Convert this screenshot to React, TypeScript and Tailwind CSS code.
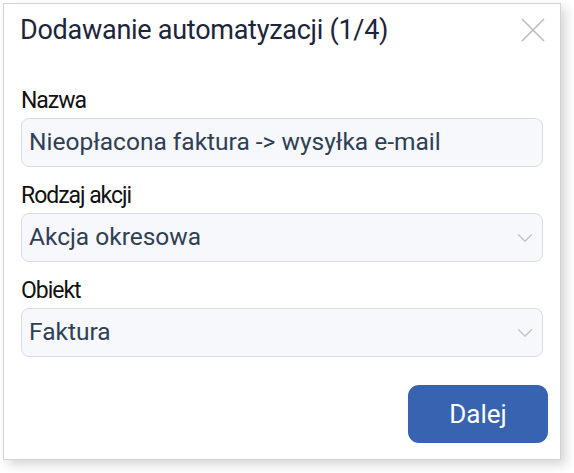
import { ChevronDown } from "lucide-react";

const font = { fontFamily: "Roboto, 'Noto Sans', sans-serif" };

function Field({ label, value, select }: { label: string; value: string; select?: boolean }) {
  return (
    <div className="flex flex-col">
      <div className="h-[46px] flex items-end pb-[6px]">
        <label className="text-[23px] leading-none tracking-[-0.045em] text-[#111]">{label}</label>
      </div>
      <div className="flex items-center justify-between h-[49px] rounded-[8px] border border-[#d6dce9] bg-[#f7f8fb] pl-[7px] pr-[4px]">
        <span className="text-[24.5px] text-[#2f3f55]">{value}</span>
        {select && <ChevronDown className="w-[26px] h-[26px] text-[#bfc3ca]" strokeWidth={1.2} />}
      </div>
    </div>
  );
}

export default function App() {
  return (
    <div className="w-[574px] h-[473px] bg-white pl-[3px] pt-[3px]" style={font}>
      <div className="w-[558px] h-[457px] border border-[#d3d3d3] bg-white shadow-[5px_5px_10px_rgba(0,0,0,0.16)] flex flex-col">
        <div className="flex items-center justify-between h-[50px] pl-[16px] pr-[15px] pt-[2px]">
          <h1 className="text-[27px] leading-none text-[#1c2539] tracking-[-0.01em]">Dodawanie automatyzacji (1/4)</h1>
          <svg width="24" height="24" viewBox="0 0 24 24" className="text-[#bcbcbc]">
            <path d="M1 1L23 23M23 1L1 23" stroke="currentColor" strokeWidth="1.6" fill="none" />
          </svg>
        </div>
        <div className="flex flex-col px-[17px] pt-[18px]">
          <Field label="Nazwa" value="Nieopłacona faktura -> wysyłka e-mail" />
          <Field label="Rodzaj akcji" value="Akcja okresowa" select />
          <Field label="Obiekt" value="Faktura" select />
        </div>
        <div className="flex justify-end pr-[12px] pt-[28px]">
          <button className="w-[140px] h-[58px] rounded-[11px] bg-[#3763b0] text-white text-[26px]">Dalej</button>
        </div>
      </div>
    </div>
  );
}
